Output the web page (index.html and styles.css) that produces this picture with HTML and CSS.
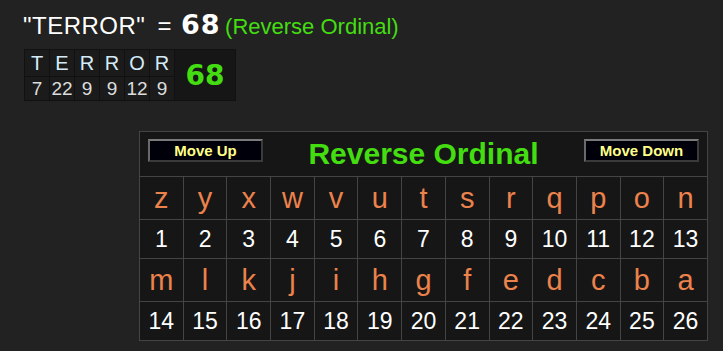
FILE: index.html
```html
<!DOCTYPE html>
<html>
<head>
<meta charset="utf-8">
<link rel="stylesheet" href="styles.css">
</head>
<body>
<div class="page">
  <div class="headline">
    <span class="word">"TERROR"</span><span class="eq">= </span><span class="total">68</span> <span class="cipher">(Reverse Ordinal)</span>
  </div>
  <table class="breakdown">
    <tr class="letters">
      <td>T</td><td>E</td><td>R</td><td>R</td><td>O</td><td>R</td>
      <td class="sum" rowspan="2">68</td>
    </tr>
    <tr class="values">
      <td>7</td><td>22</td><td>9</td><td>9</td><td>12</td><td>9</td>
    </tr>
  </table>
  <table class="chart">
    <tr class="head">
      <td colspan="13">
        <div class="head-inner">
          <button class="btn">Move Up</button>
          <span class="title">Reverse Ordinal</span>
          <button class="btn">Move Down</button>
        </div>
      </td>
    </tr>
    <tr class="lrow">
      <td>z</td><td>y</td><td>x</td><td>w</td><td>v</td><td>u</td><td>t</td><td>s</td><td>r</td><td>q</td><td>p</td><td>o</td><td>n</td>
    </tr>
    <tr class="nrow">
      <td>1</td><td>2</td><td>3</td><td>4</td><td>5</td><td>6</td><td>7</td><td>8</td><td>9</td><td>10</td><td>11</td><td>12</td><td>13</td>
    </tr>
    <tr class="lrow">
      <td>m</td><td>l</td><td>k</td><td>j</td><td>i</td><td>h</td><td>g</td><td>f</td><td>e</td><td>d</td><td>c</td><td>b</td><td>a</td>
    </tr>
    <tr class="nrow">
      <td>14</td><td>15</td><td>16</td><td>17</td><td>18</td><td>19</td><td>20</td><td>21</td><td>22</td><td>23</td><td>24</td><td>25</td><td>26</td>
    </tr>
  </table>
</div>
</body>
</html>
```

FILE: styles.css
```css
html, body {
  margin: 0;
  padding: 0;
  background: #222222;
}
body {
  font-family: "Liberation Sans", Arial, sans-serif;
  color: #fff;
  width: 723px;
  height: 351px;
  overflow: hidden;
}
.page {
  padding: 8px 0 0 23px;
}
.headline {
  height: 34px;
  line-height: 34px;
  white-space: nowrap;
}
.word {
  font-size: 24px;
  letter-spacing: 0.5px;
  color: #fff;
}
.eq {
  font-size: 24px;
  color: #fff;
  margin-left: 12px;
}
.total {
  font-family: "DejaVu Sans", Verdana, sans-serif;
  font-weight: bold;
  font-size: 27px;
  letter-spacing: 1px;
  color: #fff;
  margin-left: 3px;
}
.cipher {
  font-size: 22px;
  color: #44dd11;
}
.breakdown {
  margin-top: 7px;
  margin-left: 1px;
  border-collapse: separate;
  border-spacing: 1px;
  background: #111;
}
.breakdown td {
  background: #1b1b1b;
  padding: 0;
  text-align: center;
  width: 24px;
}
.breakdown .letters td {
  height: 26px;
  font-size: 20px;
  color: #d6ebf8;
}
.breakdown .values td {
  height: 23px;
  font-size: 19px;
  color: #dddddd;
}
.breakdown td.sum {
  width: 60px;
  font-family: "DejaVu Sans", Verdana, sans-serif;
  font-weight: bold;
  font-size: 28px;
  color: #44dd11;
  background: #161616;
}
.chart {
  margin-top: 30px;
  margin-left: 116px;
  border-collapse: collapse;
  border: 1px solid #444;
  background: #161616;
  width: 569px;
  table-layout: fixed;
}
.chart td {
  border: 1px solid #444;
  padding: 0;
  text-align: center;
}
.chart .head td {
  height: 44px;
}
.head-inner {
  display: flex;
  align-items: center;
  justify-content: space-between;
  padding: 0 8px;
  height: 44px;
}
.btn {
  width: 115px;
  height: 23px;
  padding: 0;
  background: #00000a;
  border: 2px solid;
  border-color: #7a7a7a #3a3a3a #3a3a3a #6a6a6a;
  color: #ffff88;
  font-family: "Liberation Sans", Arial, sans-serif;
  font-weight: bold;
  font-size: 15px;
  margin-top: -1px;
  margin-bottom: 7px;
}
.title {
  font-size: 30px;
  font-weight: bold;
  color: #44dd11;
}
.lrow td {
  height: 42px;
  font-size: 29px;
  color: #ec824c;
}
.nrow td {
  height: 38px;
  font-size: 23px;
  color: #fff;
}
```
